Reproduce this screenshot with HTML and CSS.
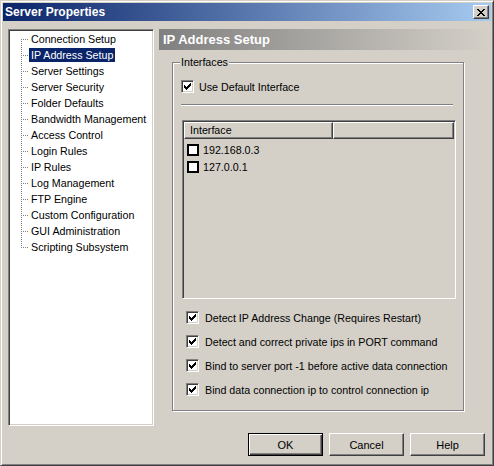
FILE: index.html
```html
<!DOCTYPE html>
<html>
<head>
<meta charset="utf-8">
<link rel="stylesheet" href="styles.css">
</head>
<body>
<div class="window">
  <div class="titlebar">
    <span class="title">Server Properties</span>
    <div class="close">
      <svg width="8" height="7" viewBox="0 0 8 7"><path fill="#000" d="M0 0h2v1H0zM6 0h2v1H6zM1 1h2v1H1zM5 1h2v1H5zM2 2h4v1H2zM3 3h2v1H3zM2 4h4v1H2zM1 5h2v1H1zM5 5h2v1H5zM0 6h2v1H0zM6 6h2v1H6z"/></svg>
    </div>
  </div>
  <div class="body">
    <div class="main">
      <div class="tree">
        <ul class="tree-list">
          <li class="first"><span>Connection Setup</span></li>
          <li class="selected"><span>IP Address Setup</span></li>
          <li><span>Server Settings</span></li>
          <li><span>Server Security</span></li>
          <li><span>Folder Defaults</span></li>
          <li><span>Bandwidth Management</span></li>
          <li><span>Access Control</span></li>
          <li><span>Login Rules</span></li>
          <li><span>IP Rules</span></li>
          <li><span>Log Management</span></li>
          <li><span>FTP Engine</span></li>
          <li><span>Custom Configuration</span></li>
          <li><span>GUI Administration</span></li>
          <li class="last"><span>Scripting Subsystem</span></li>
        </ul>
      </div>
      <div class="page">
        <div class="page-header">IP Address Setup</div>
        <div class="group">
          <span class="legend">Interfaces</span>
          <div class="check check-default">
            <span class="cb"><svg width="7" height="7" viewBox="0 0 7 7"><path fill="#000" d="M0 2h1v3H0zM1 3h1v3H1zM2 4h1v3H2zM3 3h1v3H3zM4 2h1v3H4zM5 1h1v3H5zM6 0h1v3H6z"/></svg></span>
            <span>Use Default Interface</span>
          </div>
          <div class="sep"></div>
          <div class="listbox">
            <div class="lv-head">
              <div class="lv-col lv-col1">Interface</div>
              <div class="lv-col lv-col2"></div>
            </div>
            <div class="lv-row"><span class="lv-box"></span><span>192.168.0.3</span></div>
            <div class="lv-row"><span class="lv-box"></span><span>127.0.0.1</span></div>
          </div>
          <div class="opts">
            <div class="check">
              <span class="cb"><svg width="7" height="7" viewBox="0 0 7 7"><path fill="#000" d="M0 2h1v3H0zM1 3h1v3H1zM2 4h1v3H2zM3 3h1v3H3zM4 2h1v3H4zM5 1h1v3H5zM6 0h1v3H6z"/></svg></span>
              <span>Detect IP Address Change (Requires Restart)</span>
            </div>
            <div class="check">
              <span class="cb"><svg width="7" height="7" viewBox="0 0 7 7"><path fill="#000" d="M0 2h1v3H0zM1 3h1v3H1zM2 4h1v3H2zM3 3h1v3H3zM4 2h1v3H4zM5 1h1v3H5zM6 0h1v3H6z"/></svg></span>
              <span>Detect and correct private ips in PORT command</span>
            </div>
            <div class="check">
              <span class="cb"><svg width="7" height="7" viewBox="0 0 7 7"><path fill="#000" d="M0 2h1v3H0zM1 3h1v3H1zM2 4h1v3H2zM3 3h1v3H3zM4 2h1v3H4zM5 1h1v3H5zM6 0h1v3H6z"/></svg></span>
              <span>Bind to server port -1 before active data connection</span>
            </div>
            <div class="check">
              <span class="cb"><svg width="7" height="7" viewBox="0 0 7 7"><path fill="#000" d="M0 2h1v3H0zM1 3h1v3H1zM2 4h1v3H2zM3 3h1v3H3zM4 2h1v3H4zM5 1h1v3H5zM6 0h1v3H6z"/></svg></span>
              <span>Bind data connection ip to control connection ip</span>
            </div>
          </div>
        </div>
      </div>
    </div>
    <div class="buttons">
      <button class="btn btn-default">OK</button>
      <button class="btn">Cancel</button>
      <button class="btn">Help</button>
    </div>
  </div>
</div>
</body>
</html>
```

FILE: styles.css
```css
html, body {
  margin: 0;
  padding: 0;
  background: #D4D0C8;
}
body {
  font-family: "Liberation Sans", Arial, sans-serif;
  font-size: 10.7px;
  color: #000;
}
.window {
  width: 494px;
  height: 466px;
  box-sizing: border-box;
  border: 1px solid;
  border-color: #D4D0C8 #404040 #404040 #D4D0C8;
  box-shadow: inset 1px 1px #fff, inset -1px -1px #808080;
  padding: 2px;
  display: flex;
  flex-direction: column;
  background: #D4D0C8;
}
.titlebar {
  height: 18px;
  flex: none;
  background: linear-gradient(to right, #0A246A, #A6CAF0);
  display: flex;
  align-items: center;
  justify-content: space-between;
  padding: 0 2px;
  color: #fff;
  font-weight: bold;
  font-size: 12px;
}
.close {
  width: 16px;
  height: 14px;
  box-sizing: border-box;
  background: #D4D0C8;
  border: 1px solid;
  border-color: #fff #404040 #404040 #fff;
  box-shadow: inset -1px -1px #808080;
  display: flex;
  align-items: center;
  justify-content: center;
}
.close svg { display: block; margin: 0 1px 0 0; }
.body {
  flex: 1;
  display: flex;
  flex-direction: column;
  padding: 8px 0 0 5px;
}
.main {
  display: flex;
  gap: 5px;
  height: 397px;
}
.tree {
  width: 146px;
  flex: none;
  box-sizing: border-box;
  background: #fff;
  border: 1px solid;
  border-color: #808080 #fff #fff #808080;
  box-shadow: inset 1px 1px #404040, inset -1px -1px #D4D0C8;
  padding: 1px;
}
.tree-list {
  list-style: none;
  margin: 0;
  padding: 0;
}
.tree-list li {
  height: 16px;
  padding-left: 19px;
  display: flex;
  align-items: center;
  background-image:
    repeating-linear-gradient(to right, #808080 0 1px, transparent 1px 2px),
    repeating-linear-gradient(to bottom, #808080 0 1px, transparent 1px 2px);
  background-repeat: no-repeat;
  background-size: 8px 1px, 1px 16px;
  background-position: 11px 8px, 11px 0;
}
.tree-list li.first {
  background-size: 8px 1px, 1px 8px;
  background-position: 11px 8px, 11px 8px;
}
.tree-list li.last {
  background-size: 8px 1px, 1px 9px;
  background-position: 11px 8px, 11px 0;
}
.tree-list li span {
  line-height: 14px;
  padding: 0 2px;
  white-space: nowrap;
}
.tree-list li.selected span {
  background: #0A246A;
  color: #fff;
}
.page {
  flex: 1;
  display: flex;
  flex-direction: column;
}
.page-header {
  height: 21px;
  line-height: 21px;
  padding-left: 4px;
  background: linear-gradient(to right, #808080, #D4D0C8);
  color: #fff;
  font-weight: bold;
  font-size: 13px;
}
.group {
  position: relative;
  margin: 12px 0 0 13px;
  width: 292px;
  height: 349px;
  box-sizing: border-box;
  border: 1px solid #808080;
  box-shadow: inset 1px 1px #fff, 1px 1px #fff;
  padding: 0 0 0 8px;
  display: flex;
  flex-direction: column;
}
.legend {
  position: absolute;
  top: -7px;
  left: 7px;
  padding: 0 1px;
  background: #D4D0C8;
  line-height: 13px;
}
.check {
  display: flex;
  align-items: center;
  gap: 6px;
  height: 13px;
  white-space: nowrap;
}
.check-default {
  margin-top: 17px;
  gap: 5px;
}
.cb {
  width: 13px;
  height: 13px;
  flex: none;
  box-sizing: border-box;
  background: #fff;
  border: 1px solid;
  border-color: #808080 #fff #fff #808080;
  box-shadow: inset 1px 1px #404040, inset -1px -1px #D4D0C8;
  padding: 2px 0 0 2px;
}
.cb svg { display: block; }
.sep {
  margin-top: 11px;
  width: 272px;
  height: 0;
  border-top: 1px solid #808080;
  border-bottom: 1px solid #fff;
}
.listbox {
  margin: 14px 0 0 1px;
  width: 274px;
  height: 179px;
  box-sizing: border-box;
  border: 1px solid;
  border-color: #808080 #fff #fff #808080;
  box-shadow: inset 1px 1px #404040, inset -1px -1px #D4D0C8;
  padding: 1px;
  background: #D4D0C8;
}
.lv-head {
  display: flex;
  height: 17px;
}
.lv-col {
  box-sizing: border-box;
  height: 17px;
  line-height: 15px;
  border: 1px solid;
  border-color: #fff #404040 #404040 #fff;
  box-shadow: inset -1px -1px #808080;
  padding-left: 5px;
}
.lv-col1 { width: 149px; }
.lv-col2 { flex: 1; }
.lv-row {
  display: flex;
  align-items: center;
  gap: 4px;
  height: 17px;
  padding-left: 3px;
}
.lv-head + .lv-row { margin-top: 2px; }
.lv-box {
  width: 12px;
  height: 12px;
  box-sizing: border-box;
  border: 2px solid #000;
  background: #fff;
}
.opts {
  margin: 12px 0 0 5px;
  display: flex;
  flex-direction: column;
  gap: 11px;
}
.buttons {
  display: flex;
  justify-content: flex-end;
  gap: 6px;
  margin-top: 7px;
  padding-right: 6px;
}
.btn {
  width: 75px;
  height: 23px;
  box-sizing: border-box;
  margin: 0;
  padding: 0;
  font-family: "Liberation Sans", Arial, sans-serif;
  font-size: 11px;
  color: #000;
  background: #D4D0C8;
  border: 1px solid;
  border-color: #fff #404040 #404040 #fff;
  box-shadow: inset -1px -1px #808080;
}
.btn-default {
  border: 1px solid #000;
  box-shadow: inset 1px 1px #fff, inset -1px -1px #404040, inset -2px -2px #808080;
}
```
